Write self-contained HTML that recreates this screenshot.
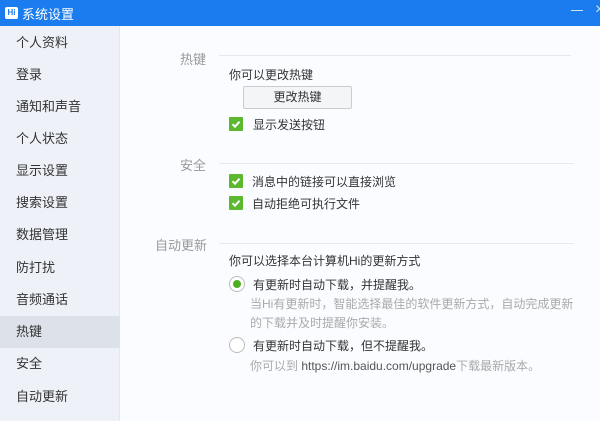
<!DOCTYPE html>
<html><head><meta charset="utf-8"><style>
*{margin:0;padding:0;box-sizing:border-box}
body{width:600px;height:421px;overflow:hidden;font-family:"Liberation Sans","Noto Sans CJK SC",sans-serif;font-size:12px;color:#333;background:#fafcff;position:relative}
.a{position:absolute;white-space:nowrap}
#tb{left:0;top:0;width:600px;height:26px;background:#1a7cef}
#sb{left:0;top:26px;width:120px;height:395px;background:#eef2f8;border-right:1px solid #e3e7ee}
.it{position:absolute;left:0;width:120px;height:32px;line-height:32px;padding-left:16px;font-size:13px;color:#333}
.sel{background:#dde2ea}
.lab{color:#999;font-size:13px}
.ln{height:1px;background:#e6e8ec}
.cb{width:14px;height:14px;background:#5cb82e;border-radius:1px}
.cb svg{display:block}
.rd{width:16px;height:16px;border:1px solid #bbb;border-radius:50%;background:#fff}
.g{color:#aaa}
</style></head><body>
<div class="a" id="tb"></div>
<div class="a" style="left:5px;top:7px;width:13px;height:12px;background:#fff;border-radius:2px;color:#1a7cef;font-size:8px;font-weight:bold;line-height:12px;text-align:center">Hi</div>
<div class="a" style="left:22px;top:4px;color:#fff;font-size:13px">系统设置</div>
<div class="a" style="left:571px;top:10px;width:12px;height:1px;background:#cfe3fb"></div>
<div class="a" style="left:595px;top:1px;color:#cfe3fb;font-size:16px">×</div>
<div class="a" id="sb">
<div class="it" style="top:1px">个人资料</div>
<div class="it" style="top:33px">登录</div>
<div class="it" style="top:65px">通知和声音</div>
<div class="it" style="top:97px">个人状态</div>
<div class="it" style="top:129px">显示设置</div>
<div class="it" style="top:161px">搜索设置</div>
<div class="it" style="top:193px">数据管理</div>
<div class="it" style="top:226px">防打扰</div>
<div class="it" style="top:258px">音频通话</div>
<div class="it sel" style="top:290px">热键</div>
<div class="it" style="top:322px">安全</div>
<div class="it" style="top:355px">自动更新</div>
</div>

<div class="a lab" style="left:180px;top:49px">热键</div>
<div class="a ln" style="left:219px;top:55px;width:352px"></div>
<div class="a" style="left:229px;top:66px">你可以更改热键</div>
<div class="a" style="left:243px;top:86px;width:109px;height:23px;border:1px solid #ccc;border-radius:2px;background:#f4f5f7;text-align:center;line-height:21px">更改热键</div>
<div class="a cb" style="left:229px;top:117px"><svg width="14" height="14"><path d="M3.5 7.2l2.5 2.5 4.5-5" stroke="#fff" stroke-width="2" fill="none"/></svg></div>
<div class="a" style="left:253px;top:116px">显示发送按钮</div>

<div class="a lab" style="left:180px;top:155px">安全</div>
<div class="a ln" style="left:219px;top:163px;width:355px"></div>
<div class="a cb" style="left:229px;top:174px"><svg width="14" height="14"><path d="M3.5 7.2l2.5 2.5 4.5-5" stroke="#fff" stroke-width="2" fill="none"/></svg></div>
<div class="a" style="left:252px;top:173px">消息中的链接可以直接浏览</div>
<div class="a cb" style="left:229px;top:196px"><svg width="14" height="14"><path d="M3.5 7.2l2.5 2.5 4.5-5" stroke="#fff" stroke-width="2" fill="none"/></svg></div>
<div class="a" style="left:252px;top:195px">自动拒绝可执行文件</div>

<div class="a lab" style="left:155px;top:235px">自动更新</div>
<div class="a ln" style="left:219px;top:243px;width:355px"></div>
<div class="a" style="left:229px;top:252px">你可以选择本台计算机Hi的更新方式</div>
<div class="a rd" style="left:229px;top:276px"><div style="margin:3px;width:8px;height:8px;border-radius:50%;background:#4caf20"></div></div>
<div class="a" style="left:253px;top:276px">有更新时自动下载，并提醒我。</div>
<div class="a g" style="left:250px;top:295px">当Hi有更新时，智能选择最佳的软件更新方式，自动完成更新</div>
<div class="a g" style="left:250px;top:314px">的下载并及时提醒你安装。</div>
<div class="a rd" style="left:229px;top:337px"></div>
<div class="a" style="left:253px;top:337px">有更新时自动下载，但不提醒我。</div>
<div class="a g" style="left:250px;top:357px">你可以到 <span style="color:#555">https://im.baidu.com/upgrade</span>下载最新版本。</div>
</body></html>
